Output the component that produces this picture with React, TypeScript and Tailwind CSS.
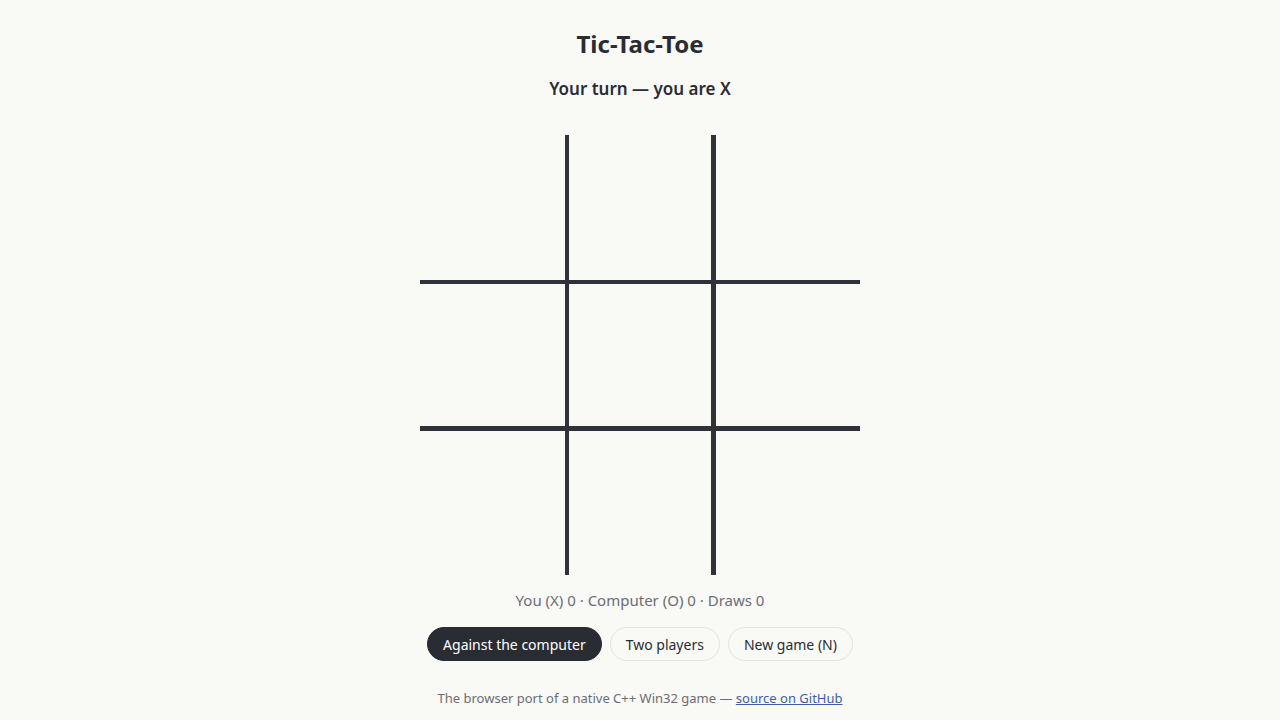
import React, { useState } from "react";

type Cell = "X" | "O" | null;

export default function App() {
  const [cells, setCells] = useState<Cell[]>(Array(9).fill(null));
  const [mode, setMode] = useState<"cpu" | "two">("cpu");

  const play = (i: number) => {
    if (cells[i]) return;
    const next = cells.slice();
    next[i] = "X";
    setCells(next);
  };

  const pill = "h-[34px] px-[15px] rounded-full text-[14px] border";
  const on = " bg-[#2a2c33] text-white border-[#2a2c33]";
  const off = " bg-[#f9f9f6] text-[#2a2c33] border-[#e3e3de]";

  return (
    <div
      className="min-h-screen bg-[#f9f9f6] text-[#2a2c33] flex flex-col items-center pt-[27px]"
      style={{ fontFamily: '"Noto Sans", "Open Sans", sans-serif' }}
    >
      <h1 className="text-[24px] leading-[34px] font-bold">Tic-Tac-Toe</h1>
      <p className="mt-[16px] text-[17px] leading-[24px] font-semibold">Your turn — you are X</p>

      <div className="mt-[34px] w-[440px] h-[440px] grid grid-cols-[144.5px_142px_144.5px] grid-rows-[144.5px_142px_144.5px] gap-[4.5px] bg-[#30323a]">
        {cells.map((c, i) => (
          <button
            key={i}
            onClick={() => play(i)}
            className="bg-[#f9f9f6] flex items-center justify-center text-[80px] font-bold text-[#30323a]"
          >
            {c}
          </button>
        ))}
      </div>

      <p className="mt-[14px] text-[15px] leading-[22px] text-[#6b6e75]">
        You (X) 0 · Computer (O) 0 · Draws 0
      </p>

      <div className="mt-[16px] flex gap-2">
        <button onClick={() => setMode("cpu")} className={pill + (mode === "cpu" ? on : off)}>
          Against the computer
        </button>
        <button onClick={() => setMode("two")} className={pill + (mode === "two" ? on : off)}>
          Two players
        </button>
        <button onClick={() => setCells(Array(9).fill(null))} className={pill + off}>
          New game (N)
        </button>
      </div>

      <p className="mt-[28px] text-[13px] leading-[18px] text-[#6b6e75]">
        The browser port of a native C++ Win32 game —{" "}
        <a href="#" className="text-[#3b5fa8] underline">
          source on GitHub
        </a>
      </p>
    </div>
  );
}
